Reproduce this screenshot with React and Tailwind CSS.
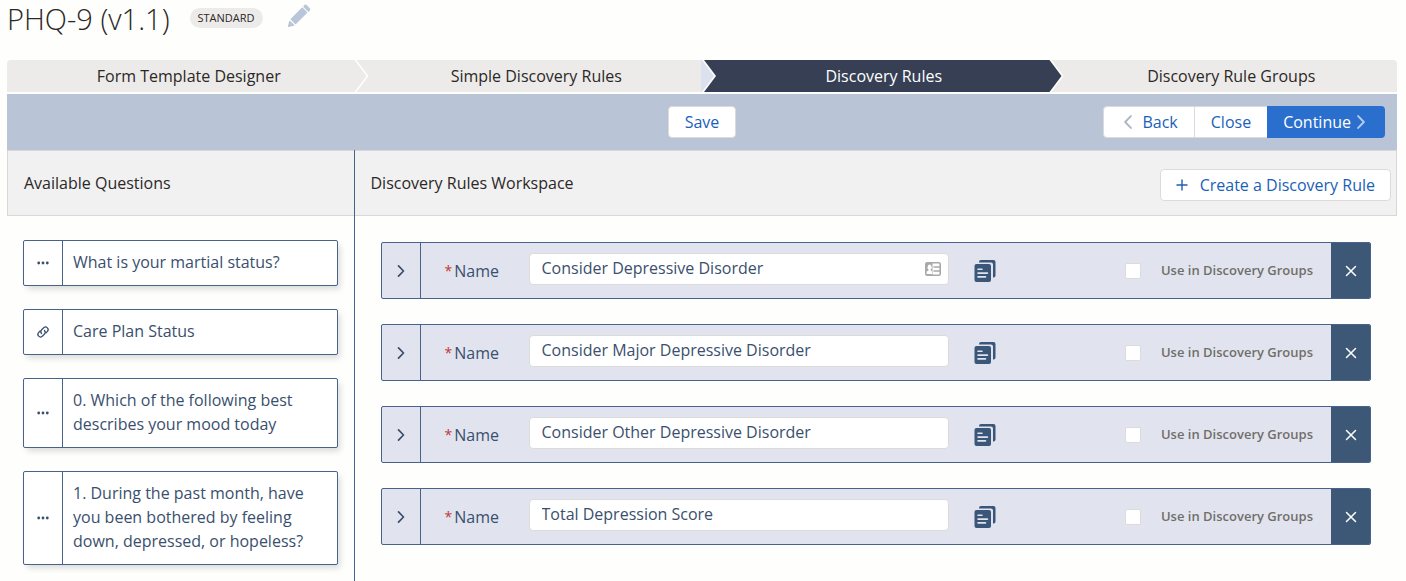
import { useState } from 'react';

const steps = ['Form Template Designer', 'Simple Discovery Rules', 'Discovery Rules', 'Discovery Rule Groups'];

const questions = [
    { id: 1, icon: 'dots', text: 'What is your martial status?' },
    { id: 2, icon: 'link', text: 'Care Plan Status' },
    { id: 3, icon: 'dots', text: '0. Which of the following best describes your mood today' },
    { id: 4, icon: 'dots', text: '1. During the past month, have you been bothered by feeling down, depressed, or hopeless?' }
];

const initialRules = [
    { id: 1, name: 'Consider Depressive Disorder', inGroups: false },
    { id: 2, name: 'Consider Major Depressive Disorder', inGroups: false },
    { id: 3, name: 'Consider Other Depressive Disorder', inGroups: false },
    { id: 4, name: 'Total Depression Score', inGroups: false }
];

function PencilIcon() {
    return (
        <svg viewBox="0 0 24 24" className="size-6" fill="#b9c5d8" aria-hidden="true">
            <path d="M3.800 14.800 14.800 3.800a.7.7 0 0 1 1 0l4.200 4.200a.7.7 0 0 1 0 1L9 20a.7.7 0 0 1-1 0l-4.200-4.200a.7.7 0 0 1 0-1z" />
            <path d="m22.600 4-2.700-2.700a2 2 0 0 0-2.800 0l-.6.600a.7.7 0 0 0 0 1l4.500 4.500a.7.7 0 0 0 1 0l.6-.6a2 2 0 0 0 0-2.800z" />
            <path d="M.9 22.300 2.200 17.200a.6.6 0 0 1 1-.3l3.900 3.900a.6.6 0 0 1-.3 1l-5.100 1.300a.7.7 0 0 1-.8-.8z" />
        </svg>
    );
}

function DotsIcon() {
    return (
        <svg viewBox="0 0 14 14" className="size-3.5" fill="currentColor" aria-hidden="true">
            <circle cx="2.700" cy="7" r="1.400" />
            <circle cx="7" cy="7" r="1.400" />
            <circle cx="11.300" cy="7" r="1.400" />
        </svg>
    );
}

function LinkIcon() {
    return (
        <svg
            viewBox="0 0 24 24"
            className="size-3.5"
            fill="none"
            stroke="currentColor"
            strokeWidth="2.200"
            strokeLinecap="round"
            aria-hidden="true"
        >
            <path d="M9.500 14.500a4.600 4.600 0 0 1 .2-6.400l3.600-3.500a4.500 4.500 0 0 1 6.300 6.400l-2.300 2.300" />
            <path d="M14.500 9.500a4.600 4.600 0 0 1-.2 6.400l-3.600 3.500a4.500 4.500 0 0 1-6.300-6.400l2.300-2.300" />
        </svg>
    );
}

function ChevronIcon({ left, className }) {
    return (
        <svg
            viewBox="0 0 14 14"
            className={className}
            fill="none"
            stroke="currentColor"
            strokeWidth="1.700"
            strokeLinecap="round"
            strokeLinejoin="round"
            aria-hidden="true"
        >
            <path d={left ? 'M9.500 1.800 4.500 7l5 5.200' : 'M4.500 1.800l5 5.200-5 5.200'} />
        </svg>
    );
}

function CopyIcon() {
    return (
        <svg viewBox="0 0 22 24" className="h-6 w-[22px]" aria-hidden="true">
            <path
                d="M5 3.500V3a2 2 0 0 1 2-2h12.500a2 2 0 0 1 2 2v13.500a2 2 0 0 1-2 2H19V5.500a2 2 0 0 0-2-2z"
                fill="#3a5678"
            />
            <rect x=".5" y="5" width="16.500" height="18" rx="2" fill="#3a5678" />
            <path d="M4 10.300h4M4 14.100h9.500M4 17.900h7.500" stroke="#e1e4ee" strokeWidth="1.600" strokeLinecap="round" />
        </svg>
    );
}

function ContactIcon() {
    return (
        <svg viewBox="0 0 16 14" className="h-3.5 w-4" aria-hidden="true">
            <rect x=".8" y=".8" width="14.400" height="12.400" rx="1.300" fill="#fff" stroke="#a9a9a9" strokeWidth="1.600" />
            <path d="M1 1h6.500v12H1z" fill="#a9a9a9" />
            <path d="M1.600 12V9.600l1.900-1.200V7.500a2 2.600 0 1 1 2.200 0v.9l1.400 1.200V12z" fill="#fff" />
            <path d="M8.500 4.900h6.500M8.500 9.100h6.500" stroke="#a9a9a9" strokeWidth="1.500" />
        </svg>
    );
}

function StepPath() {
    return (
        <ol className="flex h-8 overflow-hidden rounded-t">
            {steps.map((step, i) => {
                const last = i === steps.length - 1;
                let look = 'bg-[#ecebea] text-[#2b2826]';
                if (i === 1) {
                    look = 'bg-[linear-gradient(to_right,#ecebea_calc(100%-13px),#dbe1ed_calc(100%-13px))] text-[#2b2826]';
                }
                if (i === 2) look = 'bg-[#363f54] text-white';

                let shape = '-mr-3 pl-1 [clip-path:polygon(2px_0,calc(100%-12px)_0,100%_50%,calc(100%-12px)_100%,2px_100%,14px_50%)]';
                if (i === 0) shape = '-mr-3 pl-1 [clip-path:polygon(0_0,calc(100%-12px)_0,100%_50%,calc(100%-12px)_100%,0_100%)]';
                if (last) shape = 'pl-4 [clip-path:polygon(2px_0,100%_0,100%_100%,2px_100%,14px_50%)]';

                return (
                    <li key={step} className="min-w-0 flex-1">
                        <a
                            href="#"
                            aria-current={i === 2 ? 'step' : undefined}
                            className={`flex h-8 items-center justify-center ${look} ${shape}`}
                        >
                            {step}
                        </a>
                    </li>
                );
            })}
        </ol>
    );
}

function RuleRow({ rule, onChange, onRemove }) {
    const nameId = `rule-name-${rule.id}`;

    return (
        <div className="flex h-[57px] overflow-hidden rounded-xs border border-[#48628a] bg-[#e1e4ee] text-[#3a4f6e]">
            <button
                type="button"
                aria-label="Expand"
                className="flex w-[39px] shrink-0 items-center justify-center border-r border-[#48628a]"
            >
                <ChevronIcon className="size-3.5" />
            </button>

            <div className="flex flex-1 items-center pr-[18px] pl-6">
                <label htmlFor={nameId} className="flex w-[84px] shrink-0 gap-0.5">
                    <span className="text-sm leading-6 text-[#c23934]">*</span>
                    Name
                </label>
                <div className="relative mb-1 shrink grow-0 basis-[420px]">
                    <input
                        id={nameId}
                        value={rule.name}
                        onChange={(e) => onChange({ ...rule, name: e.target.value })}
                        className="h-8 w-full rounded border border-[#dddbda] bg-white px-3 pb-0.5"
                    />
                    {rule.id === 1 && (
                        <span className="absolute top-[9px] right-2">
                            <ContactIcon />
                        </span>
                    )}
                </div>
                <button type="button" aria-label="Copy" className="ml-[25px] shrink-0">
                    <CopyIcon />
                </button>
                <label className="ml-auto flex shrink-0 items-center gap-5 text-[13px] font-semibold text-[#706e6b]">
                    <input
                        type="checkbox"
                        checked={rule.inGroups}
                        onChange={(e) => onChange({ ...rule, inGroups: e.target.checked })}
                        className="size-4 appearance-none rounded-xs border border-[#dddbda] bg-white checked:bg-[#2a6fce]"
                    />
                    Use in Discovery Groups
                </label>
            </div>

            <button
                type="button"
                aria-label="Remove"
                onClick={() => onRemove(rule.id)}
                className="flex w-[39px] shrink-0 items-center justify-center bg-[#3d5877] text-white"
            >
                <svg viewBox="0 0 12 12" className="size-3" stroke="currentColor" strokeWidth="1.500" strokeLinecap="round">
                    <path d="M1.500 1.500l9 9M10.500 1.500l-9 9" />
                </svg>
            </button>
        </div>
    );
}

export default function App() {
    const [rules, setRules] = useState(initialRules);

    const handleChange = (next) => {
        setRules((prev) => prev.map((rule) => (rule.id === next.id ? next : rule)));
    };

    const handleRemove = (id) => {
        setRules((prev) => prev.filter((rule) => rule.id !== id));
    };

    return (
        <div className="flex min-h-screen flex-col bg-[#fefefd] pr-[9px] pl-[7px] font-['Open_Sans',sans-serif] text-base text-[#2b2826]">
            <header className="flex h-[60px] items-start">
                <h1 className="text-[29px] leading-[38px] font-light">PHQ-9 (v1.1)</h1>
                <span className="mt-2 ml-5 rounded-full bg-[#ecebea] px-2 text-[11px] leading-5">STANDARD</span>
                <button type="button" aria-label="Edit" className="mt-1 ml-6">
                    <PencilIcon />
                </button>
            </header>

            <StepPath />

            <div className="mt-0.5 grid h-14 grid-cols-[1fr_auto_1fr] items-center bg-[#b9c5d6] px-3 text-[#1b5fb8]">
                <button type="button" className="col-start-2 h-8 rounded border border-[#dddbda] bg-white px-4">
                    Save
                </button>
                <div className="flex h-8 justify-self-end">
                    <button type="button" className="flex items-center gap-1.5 rounded-l border border-[#dddbda] bg-white px-4">
                        <ChevronIcon left className="size-4 text-[#b0b6c3]" />
                        Back
                    </button>
                    <button type="button" className="border-y border-[#dddbda] bg-white px-4">
                        Close
                    </button>
                    <button type="button" className="flex items-center gap-0.5 rounded-r bg-[#2a6fce] px-4 text-white">
                        Continue
                        <ChevronIcon className="size-4 text-[#b3cbee]" />
                    </button>
                </div>
            </div>

            <div className="flex flex-1">
                <aside className="w-[calc(25%-1px)]">
                    <div className="flex h-[66px] items-center border border-r-0 border-[#d8d8da] bg-[#f1f1f2] px-4">
                        <h2>Available Questions</h2>
                    </div>
                    <ul className="flex flex-col gap-[23px] px-4 py-6">
                        {questions.map((q) => (
                            <li
                                key={q.id}
                                className="flex rounded-xs border border-[#48628a] bg-white text-[#3a4f6e] shadow-[3px_4px_6px_-1px_rgba(0,0,0,0.15)]"
                            >
                                <span className="flex w-[39px] shrink-0 items-center justify-center border-r border-[#48628a]">
                                    {q.icon === 'link' ? <LinkIcon /> : <DotsIcon />}
                                </span>
                                <span className="px-2.5 pt-[9px] pb-[11px] leading-6">{q.text}</span>
                            </li>
                        ))}
                    </ul>
                </aside>

                <main className="min-w-0 flex-1 border-l border-[#48628a]">
                    <div className="flex h-[66px] items-center justify-between border border-l-0 border-[#d8d8da] bg-[#f1f1f2] pr-[5px] pl-4">
                        <h2>Discovery Rules Workspace</h2>
                        <button
                            type="button"
                            className="mt-1 flex h-8 items-center gap-3 rounded border border-[#dddbda] bg-white px-[15px] text-[#1b5fb8]"
                        >
                            <svg viewBox="0 0 12 12" className="size-3" stroke="currentColor" strokeWidth="1.400" strokeLinecap="round">
                                <path d="M6 1v10M1 6h10" />
                            </svg>
                            Create a Discovery Rule
                        </button>
                    </div>
                    <div className="flex flex-col gap-[25px] p-[26px]">
                        {rules.map((rule) => (
                            <RuleRow key={rule.id} rule={rule} onChange={handleChange} onRemove={handleRemove} />
                        ))}
                    </div>
                </main>
            </div>
        </div>
    );
}
